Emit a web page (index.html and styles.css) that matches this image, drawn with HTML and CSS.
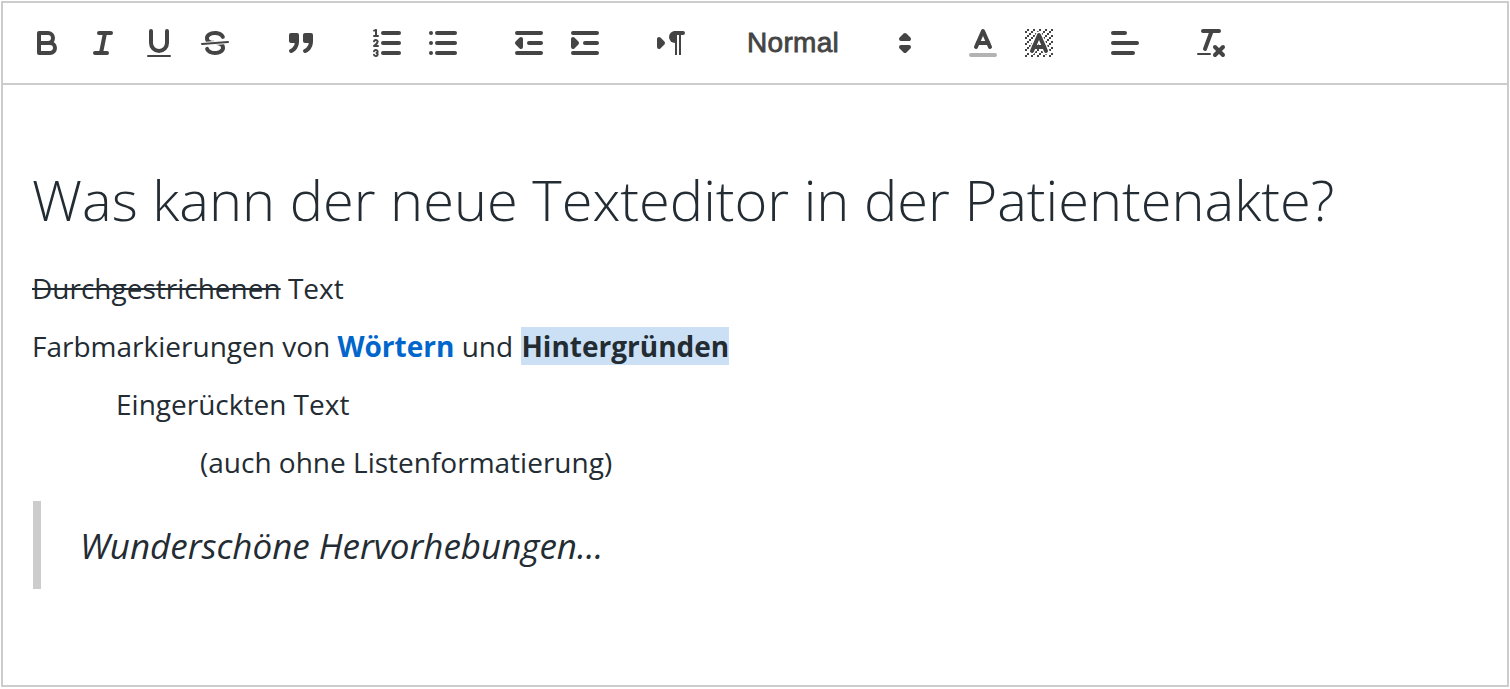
FILE: index.html
```html
<!DOCTYPE html>
<html lang="de">
<head>
<meta charset="utf-8">
<title>Texteditor</title>
<link rel="stylesheet" href="styles.css">
</head>
<body>
<svg class="defs" width="0" height="0" aria-hidden="true">
  <defs>
    <pattern id="checker" width="3" height="3" patternUnits="userSpaceOnUse" x="0" y="0">
      <rect x="2" y="0" width="1" height="1" fill="#444"/>
      <rect x="1" y="1" width="1" height="1" fill="#444"/>
      <rect x="0" y="2" width="1" height="1" fill="#444"/>
    </pattern>
  </defs>
</svg>
<div class="editor">
  <div class="toolbar">
    <span class="formats">
      <span class="btn"><svg viewBox="0 0 18 18"><path class="s" d="M5,4H9.5A2.5,2.5,0,0,1,12,6.5v0A2.5,2.5,0,0,1,9.5,9H5A0,0,0,0,1,5,9V4A0,0,0,0,1,5,4Z"/><path class="s" d="M5,9h5.5A2.5,2.5,0,0,1,13,11.5v0A2.5,2.5,0,0,1,10.5,14H5a0,0,0,0,1,0,0V9A0,0,0,0,1,5,9Z"/></svg></span>
      <span class="btn"><svg viewBox="0 0 18 18"><line class="s" x1="7" x2="13" y1="4" y2="4"/><line class="s" x1="5" x2="11" y1="14" y2="14"/><line class="s" x1="8" x2="10" y1="14" y2="4"/></svg></span>
      <span class="btn"><svg viewBox="0 0 18 18"><path class="s" d="M5,3V9a4.006,4.006,0,0,0,4,4H9a3.99,3.99,0,0,0,4-4V3"/><rect class="f" height="1" rx="0.5" ry="0.5" width="12" x="3" y="15"/></svg></span>
      <span class="btn"><svg viewBox="0 0 18 18"><line class="s thin" x1="15.5" x2="2.5" y1="8.5" y2="9.5"/><path class="f" d="M9.007,8C6.542,7.791,6,7.519,6,6.5,6,5.792,7.283,5,9,5c1.571,0,2.765.679,2.969,1.309a1,1,0,0,0,1.9-.617C13.356,4.106,11.354,3,9,3,6.2,3,4,4.538,4,6.5a3.2,3.2,0,0,0,.5,1.843Z"/><path class="f" d="M8.984,10C11.457,10.208,12,10.479,12,11.5c0,.708-1.283,1.5-3,1.5-1.571,0-2.765-.679-2.969-1.309a1,1,0,1,0-1.9.617C4.644,13.894,6.646,15,9,15c2.8,0,5-1.538,5-3.5a3.2,3.2,0,0,0-.5-1.843Z"/></svg></span>
    </span>
    <span class="formats">
      <span class="btn"><svg viewBox="0 0 18 18"><rect class="f s" height="3" width="3" x="4" y="5"/><rect class="f s" height="3" width="3" x="11" y="5"/><path class="s" d="M7,8c0,4.031-3,5-3,5"/><path class="s" d="M14,8c0,4.031-3,5-3,5"/></svg></span>
    </span>
    <span class="formats">
      <span class="btn"><svg viewBox="0 0 18 18"><line class="s" x1="7" x2="15" y1="4" y2="4"/><line class="s" x1="7" x2="15" y1="9" y2="9"/><line class="s" x1="7" x2="15" y1="14" y2="14"/><line class="s thin" x1="2.5" x2="4.5" y1="5.5" y2="5.5"/><path class="f" d="M3.5,6A0.5,0.5,0,0,1,3,5.5V3.085l-0.276.138A0.5,0.5,0,0,1,2.053,3c-0.124-.247-0.023-0.324.224-0.447l1-.5A0.5,0.5,0,0,1,4,2.5v3A0.5,0.5,0,0,1,3.5,6Z"/><path class="s thin" d="M4.5,10.5h-2c0-.234,1.85-1.076,1.85-2.234A0.959,0.959,0,0,0,2.5,8.156"/><path class="s thin" d="M2.5,14.846a0.959,0.959,0,0,0,1.85-.109A0.7,0.7,0,0,0,3.75,14a0.688,0.688,0,0,0,.6-0.736,0.959,0.959,0,0,0-1.85-.109"/></svg></span>
      <span class="btn"><svg viewBox="0 0 18 18"><line class="s" x1="6" x2="15" y1="4" y2="4"/><line class="s" x1="6" x2="15" y1="9" y2="9"/><line class="s" x1="6" x2="15" y1="14" y2="14"/><line class="s" x1="3" x2="3" y1="4" y2="4"/><line class="s" x1="3" x2="3" y1="9" y2="9"/><line class="s" x1="3" x2="3" y1="14" y2="14"/></svg></span>
    </span>
    <span class="formats">
      <span class="btn"><svg viewBox="0 0 18 18"><line class="s" x1="3" x2="15" y1="14" y2="14"/><line class="s" x1="3" x2="15" y1="4" y2="4"/><line class="s" x1="9" x2="15" y1="9" y2="9"/><polyline class="f s" points="5 7 5 11 3 9 5 7"/></svg></span>
      <span class="btn"><svg viewBox="0 0 18 18"><line class="s" x1="3" x2="15" y1="14" y2="14"/><line class="s" x1="3" x2="15" y1="4" y2="4"/><line class="s" x1="9" x2="15" y1="9" y2="9"/><polyline class="f s" points="3 7 3 11 5 9 3 7"/></svg></span>
    </span>
    <span class="formats">
      <span class="btn"><svg viewBox="0 0 18 18"><polygon class="f s" points="3 11 5 9 3 7 3 11"/><line class="s" x1="15" x2="11" y1="4" y2="4"/><path class="f" d="M11,3a3,3,0,0,0,0,6h1V3H11Z"/><rect class="f" height="11" width="1" x="11" y="4"/><rect class="f" height="11" width="1" x="13" y="4"/></svg></span>
    </span>
    <span class="formats">
      <span class="picker">
        <span class="picker-label">Normal</span>
        <svg class="arrows" viewBox="0 0 18 18"><polygon class="f s" points="7 11 9 13 11 11 7 11"/><polygon class="f s" points="7 7 9 5 11 7 7 7"/></svg>
      </span>
    </span>
    <span class="formats">
      <span class="btn"><svg viewBox="0 0 18 18"><line class="s label" x1="3" x2="15" y1="15" y2="15"/><polyline class="s" points="5.5 11 9 3 12.5 11"/><line class="s" x1="11.63" x2="6.38" y1="9" y2="9"/></svg></span>
      <span class="btn"><svg viewBox="0 0 18 18"><rect class="check" x="2" y="2" width="14" height="14"/><polyline class="s halo" points="5.5 13 9 5 12.5 13"/><polyline class="s" points="5.5 13 9 5 12.5 13"/><line class="s" x1="11.63" x2="6.38" y1="11" y2="11"/></svg></span>
    </span>
    <span class="formats">
      <span class="btn"><svg viewBox="0 0 18 18"><line class="s" x1="3" x2="15" y1="9" y2="9"/><line class="s" x1="3" x2="13" y1="14" y2="14"/><line class="s" x1="3" x2="9" y1="4" y2="4"/></svg></span>
    </span>
    <span class="formats">
      <span class="btn"><svg viewBox="0 0 18 18"><line class="s" x1="5" x2="13" y1="3" y2="3"/><line class="s" x1="6" x2="9.35" y1="12" y2="3"/><line class="s" x1="11" x2="15" y1="11" y2="15"/><line class="s" x1="15" x2="11" y1="11" y2="15"/><rect class="f" height="1" rx="0.5" ry="0.5" width="7" x="2" y="14"/></svg></span>
    </span>
  </div>
  <div class="content">
    <h1>Was kann der neue Texteditor in der Patientenakte?</h1>
    <p><s>Durchgestrichenen</s> Text</p>
    <p>Farbmarkierungen von <strong class="blue">Wörtern</strong> und <strong class="mark">Hintergründen</strong></p>
    <p class="indent-1">Eingerückten Text</p>
    <p class="indent-2">(auch ohne Listenformatierung)</p>
    <blockquote>Wunderschöne Hervorhebungen...</blockquote>
  </div>
</div>
</body>
</html>
```

FILE: styles.css
```css
* { box-sizing: border-box; }
html, body { margin: 0; padding: 0; background: #fff; height: 100%; overflow: hidden; }
body { padding: 1px 1px 2px 1px; }
.defs { position: absolute; }
.editor {
  height: 100%;
  border: 2px solid #ccc;
  display: flex;
  flex-direction: column;
  font-family: "Open Sans", sans-serif;
  color: #232c33;
}
.toolbar {
  display: flex;
  align-items: center;
  padding: 16px;
  border-bottom: 2px solid #ccc;
  height: 82px;
  flex: none;
}
.formats { display: flex; margin-right: 30px; }
.formats:last-child { margin-right: 0; }
.btn { width: 56px; height: 48px; padding: 6px 10px; display: block; }
.btn svg, .arrows { width: 36px; height: 36px; display: block; overflow: visible; }
.s { fill: none; stroke: #444; stroke-width: 2; stroke-linecap: round; stroke-linejoin: round; }
.f { fill: #444; }
.f.s { fill: #444; }
.thin { stroke-width: 1; }
.label { stroke: #b3b3b3; }
.check { fill: url(#checker); }
.halo { stroke: #fff; stroke-width: 3.4; }
.picker {
  width: 196px;
  height: 48px;
  padding-left: 18px;
  padding-right: 2px;
  display: flex;
  align-items: center;
  justify-content: space-between;
  color: #444;
  font-family: "Liberation Sans", Arial, sans-serif;
  font-size: 28px;
}
.picker-label { -webkit-text-stroke: 0.8px #444; letter-spacing: 0.3px; }
.content { padding: 24px 30px 24px 29px; flex: 1; }
h1 {
  font-weight: 300;
  font-size: 56px;
  line-height: 76px;
  margin: 52px 0 0;
  padding: 0;
}
p { margin: 0; font-size: 28px; line-height: 38px; }
p + p { margin-top: 20px; }
h1 + p { margin-top: 32px; }
.indent-1 { padding-left: 84px; }
.indent-2 { padding-left: 168px; }
.blue { color: #06c; font-weight: 700; }
.mark { background: #cce0f5; font-weight: 700; margin-left: 1px; }
blockquote {
  margin: 20px 0 0 1px;
  border-left: 8px solid #ccc;
  padding: 21px 0 19px 39px;
  font-style: italic;
  font-size: 35px;
  line-height: 48px;
  letter-spacing: -0.03px;
}
```
